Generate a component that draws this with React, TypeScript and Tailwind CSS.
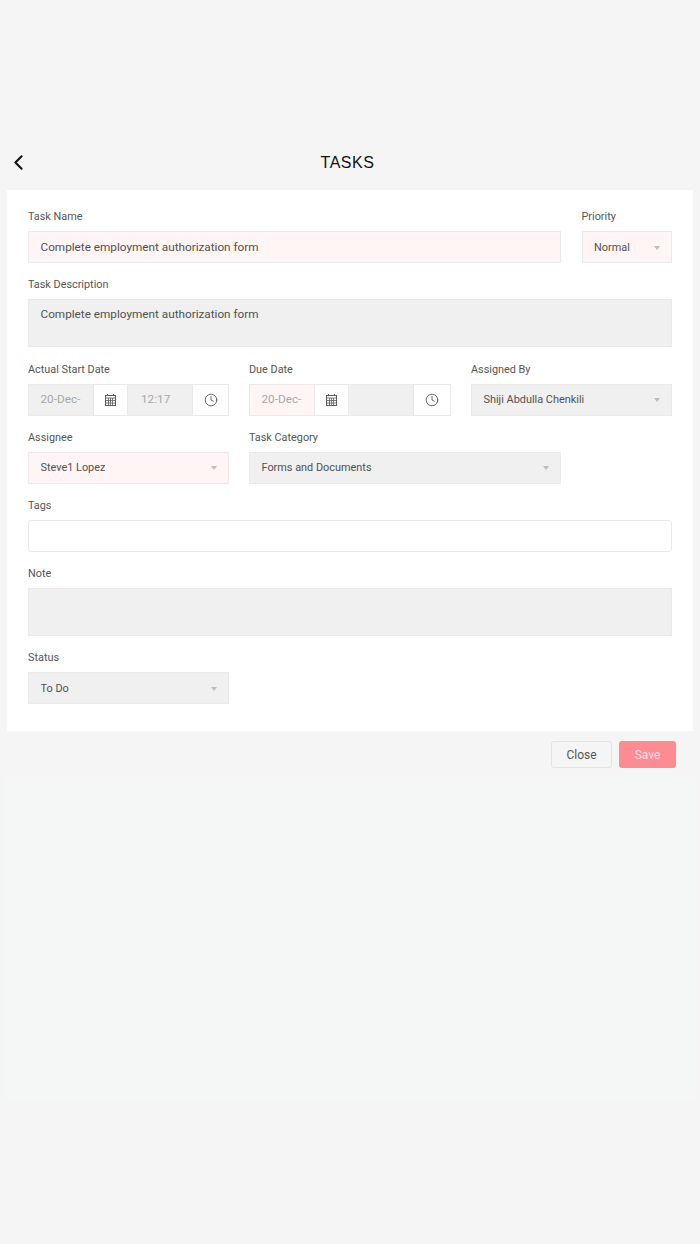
import { ChevronLeft, Clock } from "lucide-react";

const labelCls = "block h-[15px] mb-[7px] text-[10.85px] leading-[15px] text-[#555] whitespace-nowrap";
const fieldCls = "h-[32px] border border-[#ebe9e9] px-[11.5px] flex items-center text-[11.75px] text-[#505050]";
const rowCls = "grid grid-cols-[201px_202px_201px] gap-x-[20px]";

const Field: React.FC<{ label: string; className?: string; children: React.ReactNode }> = ({ label, className, children }) => {
  return (
    <div className={className}>
      <label className={labelCls}>{label}</label>
      {children}
    </div>
  );
};

const Select: React.FC<{ value: string; bg: string }> = ({ value, bg }) => {
  return (
    <div className={`${fieldCls} !text-[10.9px] justify-between ${bg}`}>
      <span className="truncate">{value}</span>
      <span className="w-0 h-0 border-x-[3.5px] border-x-transparent border-t-[4px] border-t-[#bdbdbd]"></span>
    </div>
  );
};

const CalendarIcon = () => (
  <svg width="11" height="12" viewBox="0 0 11 12" fill="none" stroke="#5c5c5c" strokeWidth="1">
    <path d="M2.5 0v2M8.5 0v2" />
    <rect x="0.5" y="1.5" width="10" height="10" fill="#fff" />
    <path d="M0.5 4h10M0.5 6.5h10M0.5 9h10M3.5 4v7.5M5.5 4v7.5M7.5 4v7.5" strokeWidth="0.8" />
  </svg>
);

const DateTime: React.FC<{ date: string; time: string; dateBg: string }> = ({ date, time, dateBg }) => {
  return (
    <div className="flex h-[32px] border border-[#ebe9e9] text-[11.75px] text-[#a8a8a8]">
      <div className={`w-[64px] pl-[11.5px] flex items-center whitespace-nowrap ${dateBg}`}>{date}</div>
      <div className="w-[35px] flex items-center justify-center bg-white border-x border-[#ebe9e9]">
        <CalendarIcon />
      </div>
      <div className="w-[64px] pl-[13px] flex items-center bg-[#f0f0f1]">{time}</div>
      <div className="flex-1 flex items-center justify-center bg-white border-l border-[#ebe9e9]">
        <Clock size={14} strokeWidth={1.5} color="#555" />
      </div>
    </div>
  );
};

export default function App() {
  return (
    <div className="min-h-[1244px] bg-[#f5f5f6] pt-[147px] font-['Roboto',sans-serif]">
      <header className="relative h-[43px] flex items-start justify-center">
        <ChevronLeft className="absolute left-[6px] top-[3px]" size={25} strokeWidth={2} color="#111" />
        <h1 className="pt-[6px] pr-[5px] font-['Liberation_Sans',sans-serif] text-[16px] leading-[19px] tracking-[0.5px] text-[#111]">TASKS</h1>
      </header>

      <main className="mx-[7px] h-[541px] bg-white px-[21px] pt-[19px] flex flex-col gap-[14px]">
        <div className="flex gap-[20.5px]">
          <Field label="Task Name" className="w-[533px]">
            <div className={`${fieldCls} pt-[1px] bg-[#fff5f5]`}>Complete employment authorization form</div>
          </Field>
          <Field label="Priority" className="flex-1">
            <Select value="Normal" bg="pt-[2px] bg-[#fff5f5]" />
          </Field>
        </div>

        <Field label="Task Description">
          <div className={`${fieldCls} !h-[48px] !items-start pt-[6px] bg-[#f0f0f1]`}>Complete employment authorization form</div>
        </Field>

        <div className={`${rowCls} mt-[1px]`}>
          <Field label="Actual Start Date">
            <DateTime date="20-Dec-" time="12:17" dateBg="bg-[#f0f0f1]" />
          </Field>
          <Field label="Due Date">
            <DateTime date="20-Dec-" time="" dateBg="bg-[#fff5f5]" />
          </Field>
          <Field label="Assigned By">
            <Select value="Shiji Abdulla Chenkili" bg="bg-[#f0f0f1]" />
          </Field>
        </div>

        <div className={rowCls}>
          <Field label="Assignee">
            <Select value="Steve1 Lopez" bg="bg-[#fff5f5]" />
          </Field>
          <Field label="Task Category" className="col-span-2 w-[312px]">
            <Select value="Forms and Documents" bg="bg-[#f0f0f1]" />
          </Field>
        </div>

        <Field label="Tags">
          <div className={`${fieldCls} bg-white rounded-[3px]`}></div>
        </Field>

        <Field label="Note">
          <div className={`${fieldCls} !h-[48px] bg-[#f0f0f1]`}></div>
        </Field>

        <div className={rowCls}>
          <Field label="Status">
            <Select value="To Do" bg="pt-[2px] bg-[#f0f0f1]" />
          </Field>
        </div>
      </main>

      <footer className="flex justify-end gap-[7px] pt-[10px] pr-[24px]">
        <button className="w-[61px] h-[27px] rounded-[3px] border border-[#e3e3e3] bg-[#f5f5f6] text-[12px] text-[#555]">Close</button>
        <button className="w-[57px] h-[27px] rounded-[3px] bg-[#fd8b92] text-[12px] text-[#ffdfe1]">Save</button>
      </footer>

      <section className="mx-[5px] mt-[7px] h-[325px] bg-[#f5f6f6]"></section>
    </div>
  );
}
